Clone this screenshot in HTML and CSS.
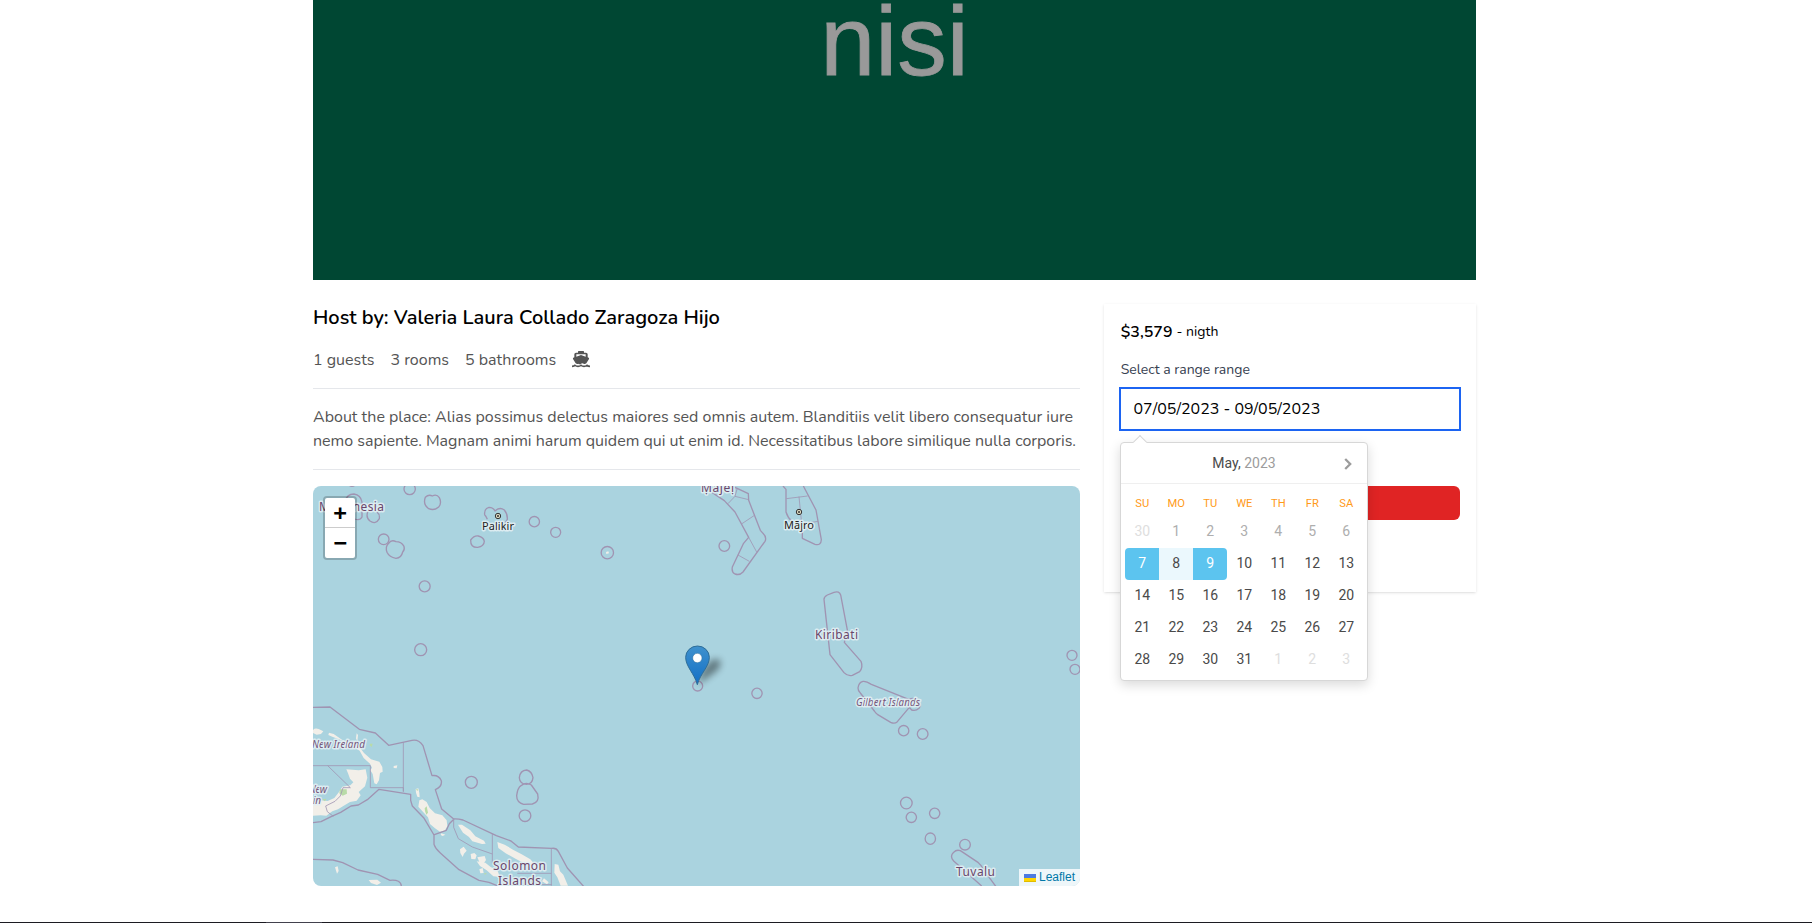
FILE: index.html
```html
<!DOCTYPE html>
<html lang="en">
<head>
<meta charset="utf-8">
<title>Place</title>
<link rel="stylesheet" href="styles.css">
</head>
<body>
<main class="page">
  <div class="hero"><span class="hero-text">nisi</span></div>
  <div class="columns">
    <section class="details">
      <h1 class="host">Host by: Valeria Laura Collado Zaragoza Hijo</h1>
      <div class="facts">
        <span>1 guests</span><span>3 rooms</span><span>5 bathrooms</span>
        <svg class="ship" viewBox="0 0 54 48"><path fill-rule="evenodd" d="M18 2q0-2 2-2h14q2 0 2 2v3h6q5 0 5 5v9l3 1.500q2 1.500 1 3.500L43 37q-4 3-8 1-4-3-8 0t-8 0q-4 2-8-1L3 24q-1-2 1-3.500L7 19v-9q0-5 5-5h6zM13 10v7l14-5 14 5v-7z"/><path d="M0 46q7 0 9-3 4 3 9 3t9-3q4 3 9 3t9-3q3 3 9 3" class="wave"/></svg>
      </div>
      <p class="about">About the place: Alias possimus delectus maiores sed omnis autem. Blanditiis velit libero consequatur iure nemo sapiente. Magnam animi harum quidem qui ut enim id. Necessitatibus labore similique nulla corporis.</p>
      <div class="map">
        <svg class="map-art" viewBox="313 486 767 400">
          <defs>
            <linearGradient id="pin" x2="0" y2="1"><stop stop-color="#3f91cd"/><stop offset="1" stop-color="#126fc6"/></linearGradient>
            <filter id="soft" x="-50%" y="-50%" width="200%" height="200%"><feGaussianBlur stdDeviation="11"/></filter>
          </defs>
          <!-- north-west atolls -->
          <g class="coast" transform="translate(300 480) scale(.33333)">
            <circle cx="156" cy="6" r="13"/><circle cx="329" cy="27" r="17"/>
            <path d="M376 52q10-10 21-4 13-7 21 5 8 16-2 28-13 12-30 5-18-13-10-34z"/>
            <path d="M136 64q4-22 26-22 20 3 24 24v45q-6 12-22 6M204 94q-8 18 6 29 17 12 28-7 2-13-7-20"/>
            <circle cx="251" cy="178" r="16"/>
            <path d="M266 190q8-12 22-5 16 0 24 14 3 11-4 17-4 18-20 19-20-3-27-18-6-17 5-27z"/>
            <circle cx="374" cy="319" r="16.500"/><circle cx="362" cy="509" r="18"/>
            <path d="M562 118q-3-9-8-14-2-18 13-22 14 1 18 11 14-13 28-3 10 12 9 28l-8 14"/>
            <path d="M512 180q10-14 23-12 16 4 18 16-1 16-20 18-22 1-21-22z"/>
            <circle cx="703" cy="125" r="15.500"/><circle cx="767" cy="157" r="15"/>
          </g>
          <!-- Marshall Islands, Kiribati -->
          <g class="coast" transform="translate(600 480) scale(.33333)">
            <circle cx="22" cy="218" r="18.500"/><path class="speck" d="M18 216l7-2 2 6-8 2z"/><circle cx="373" cy="198" r="16"/>
            <path d="M337 38l36 24 32 34 41 76-16 19-33 70q-3 16 8 21 14 5 24-6l66-92q6-12-6-24l-8-9-35-90-1-20-40-19"/>
            <path class="thin" d="M384 71l21-22 41 10M405 49l7-25M426 131l39-26M446 172l24 44M414 225l34 19M559 56l64-8M597 50l8 80M606 132l48-8"/>
            <path d="M549 18l9 10v68q5 17 18 28M610 18l38 72 16 89q-1 19-19 14l-38-18v-24"/>
            <path d="M672 358q0-8 10-13l20-8q16-5 20 8l20 105-9 37 50 57q7 18-4 31l-22 11q-15 3-25-8l-42-54z"/>
            <circle cx="471" cy="640" r="15.500"/><circle cx="293" cy="618" r="15"/>
          </g>
          <!-- Gilbert Islands -->
          <g class="coast" transform="translate(780 580) scale(.33333)">
            <path d="M234 324q2-17 15-20 10-1 25 9l114 46q12-8 25 3 11 11 4 23-10 9-22 5l-7-8-36 43q-8 8-20 2l-40-24q-5-4-9-10l-42-54q-7-6-7-15z"/>
            <circle cx="371" cy="452" r="15.500"/><circle cx="428" cy="462" r="16"/>
            <circle cx="876" cy="226" r="15"/><circle cx="885" cy="268" r="15"/>
          </g>
          <!-- Tuvalu -->
          <g class="coast" transform="translate(840 770) scale(.33333)">
            <circle cx="199" cy="99" r="17.500"/><circle cx="214" cy="142" r="15.500"/><circle cx="284" cy="130" r="15.500"/>
            <ellipse cx="271" cy="206" rx="15.500" ry="17"/><circle cx="375" cy="224" r="16"/>
            <path d="M425 348l-84-75q-13-14 0-26 8-9 20-5l54 36q10 8 15 20l38 52"/>
          </g>
          <!-- Bismarck Archipelago and Solomon Islands -->
          <g transform="translate(300 690) scale(.33333)">
            <g class="land">
              <path d="M39 120q6-7 17-3l14 7-7 8-13 2-11-5zM87 128l14 4 25 17 30 12 24 12 12 16 21 19 25 7 9 16 1 14-8 4-3 22-7 12-7-3-5-28-7-11 5-8-6-12-19-17-12-22-16-10-31-18-35-14-12-5zM139 238l37 3 21-3 5 25-7 26-19 17 6 10-12 16-20 4-20 12-16 10-17 6-18 13-17-1-23 1v-40l20-6 24 2 20-9 14-18 10-16 24-4 9-9-10-11-6-16z"/>
              <path d="M347 297l8-2 3 14 1 13-7-2-4-12zM358 331l9-3 13 8 9 18 16 16 22 6 13 15 2 18-8 13-14 3-15-10-15-13-6-20-14-15-15-17zM474 404l12 0 25 17 15 18 26 13 5 9-11 1-29-8-10-13-18-13zM592 456l22 8 25 15 26 14 26 15 15 17 4 16-16-7-17-12-29-15-31-17-22-16zM480 478l11-8 9 12-8 9-4 10-7-12zM512 492l11-3 7 7-4 12-12-1zM532 502l22-4 4 12-8 12-9 1zM530 514l26 4 16 13 20 10 8 20-20-2-20-18-20-13zM764 522l11 2 5 20 10 10 14 33h-22l-10-25-9-14zM206 570l26-1 11 9-12 7-18-6zM105 532l8-3 3 14-5 8zM170 130l4 5-2 20-4-10zM281 228l11-2-2 9-9-1zM424 430l12 4-8 4-6-3zM538 538l10-4 3 15-10 1zM732 565l14 12-5 6-15-9z"/>
            </g>
            <path class="park" d="M120 298l20 0 1 13-13 6-10-7zM210 161l8 0-3 10-6-5zM67 328l12-2-4 8zM348 297l6 1-2 6zM374 355l6-6 4 19-5 6-4-11zM553 548l8 3-7 3z"/>
            <g class="coast">
              <path d="M39 52l51-1 88 67 48 11 40 37 70-15q20-4 33 16l27 90q20-3 28 15 3 18-18 27l19 58 36 30q12-1 28 3l100 47 44 16 22 18 100 4q14-2 20 9l27 50 62 70M39 398l24-3 32-16 27-12 31-19 22-3 27-16 35-31 95 15v18l5 17 34 35 31 52v28q4 13 19 26l56 50 60 32 30 6 30 12M401 435l38-14 9-20 12-12M39 508l60 2 29 8 46 22 59 13 37 18q33-3 34 17"/>
              <circle cx="514" cy="277" r="18"/><path d="M658 263q2-22 22-23 16 4 19 23-2 20-20 20-20-2-21-20zM663 287q14-12 31-2l19 27q6 25-16 30l-26 1q-21-6-21-26 3-24 13-30z"/><circle cx="675" cy="377" r="17.500"/>
              <path class="thin" d="M39 227h172v66h99v12M310 157v148M83 227l68 66h-22l-8 25-16 16-28 14 5 17 18 14M461 388v24l14 34 42 25 60 21M577 432v88M652 550h102M754 474v113M725 584h30"/>
            </g>
          </g>
          <g class="labels">
            <text x="319" y="511" class="country" textLength="65">Micronesia</text>
            <text x="701" y="491.500" class="country" textLength="33">Ṃajeḷ</text>
            <text x="482" y="530" class="city" textLength="32">Palikir</text>
            <text x="784" y="529" class="city" textLength="30">Mājro</text>
            <text x="815" y="638.500" class="country" textLength="43">Kiribati</text>
            <text x="856" y="706" class="region" textLength="64">Gilbert Islands</text>
            <text x="312" y="748" class="region" textLength="53">New Ireland</text>
            <text x="309" y="792.500" class="region" textLength="18">New</text>
            <text x="313" y="804" class="region" textLength="8">in</text>
            <text x="493" y="870" class="country" textLength="53">Solomon</text>
            <text x="498" y="885" class="country" textLength="43">Islands</text>
            <text x="956" y="876" class="country" textLength="39">Tuvalu</text>
          </g>
          <g class="capital"><circle cx="498" cy="516" r="2.700"/><circle cx="498" cy="516" r=".8"/><circle cx="799" cy="512" r="2.700"/><circle cx="799" cy="512" r=".8"/></g>
          <g transform="translate(600 480) scale(.33333)">
            <path d="M293 614l14-44 24-27q21-12 30 0 5 20-20 37z" fill="#000" opacity=".42" filter="url(#soft)"/>
            <path d="M292 614C283 580 257 560 257 532a35.500 34 0 0 1 71 0c0 28-27 48-36 82z" fill="url(#pin)" stroke="#2e6c97" stroke-width="3"/>
            <circle cx="292" cy="534" r="14" fill="#fff" stroke="#2e6c97" stroke-width="1.500"/>
          </g>
        </svg>
        <div class="zoom"><a class="in">+</a><a class="out">−</a></div>
        <div class="credit"><svg width="12" height="8" viewBox="0 0 12 8"><path fill="#4C7BE1" d="M0 0h12v4H0z"/><path fill="#FFD500" d="M0 4h12v3H0z"/><path fill="#E0BC00" d="M0 7h12v1H0z"/></svg><span>Leaflet</span></div>
      </div>
    </section>
    <aside class="card">
      <div class="price"><b>$3,579</b><span>- nigth</span></div>
      <label class="label">Select a range range</label>
      <div class="input"><span>07/05/2023 - 09/05/2023</span></div>
      <div class="button"></div>
      <div class="picker">
        <i class="pointer"></i>
        <div class="picker-nav"><span>May, <em>2023</em></span><svg class="next" viewBox="0 0 8 12"><path d="M1.200 1l5 5-5 5"/></svg></div>
        <div class="week"><span>SU</span><span>MO</span><span>TU</span><span>WE</span><span>TH</span><span>FR</span><span>SA</span></div>
        <div class="days">
          <span class="other">30</span><span class="off">1</span><span class="off">2</span><span class="off">3</span><span class="off">4</span><span class="off">5</span><span class="off">6</span>
          <span class="sel from">7</span><span class="between">8</span><span class="sel to">9</span><span>10</span><span>11</span><span>12</span><span>13</span>
          <span>14</span><span>15</span><span>16</span><span>17</span><span>18</span><span>19</span><span>20</span>
          <span>21</span><span>22</span><span>23</span><span>24</span><span>25</span><span>26</span><span>27</span>
          <span>28</span><span>29</span><span>30</span><span>31</span><span class="other">1</span><span class="other">2</span><span class="other">3</span>
        </div>
      </div>
    </aside>
  </div>
</main>
<div class="edge"><i></i></div>
</body>
</html>
```
FILE: styles.css
```css
* { box-sizing: border-box; }
body { margin: 0; height: 923px; overflow: hidden; background: #fff; font: 16px/24px Nunito, Lato, sans-serif; color: #000; display: flex; flex-direction: column; }
.page { width: 1163px; margin-left: 313px; flex: 1; }
.hero { height: 280px; background: #004733; text-align: center; overflow: hidden; }
.hero-text { display: block; margin-top: -17px; font: 99px/115px "Liberation Sans", sans-serif; color: #999; -webkit-text-stroke: .8px #999; filter: blur(.6px); }
.columns { display: grid; grid-template-columns: 767px 372px; gap: 24px; margin-top: 24px; align-items: start; }
.host { margin: 0; font-size: 20px; line-height: 28px; font-weight: 600; white-space: nowrap; }
.facts { display: flex; gap: 16px; height: 41px; margin-top: 16px; border-bottom: 1px solid #e5e7eb; color: #545454; }
.ship { width: 18px; height: 16px; margin-top: 3px; fill: #545454; overflow: visible; }
.wave { fill: none; stroke: #545454; stroke-width: 5; }
.about { margin: 0 0 16px; padding: 16px 0; height: 81px; border-bottom: 1px solid #e5e7eb; color: #545454; }
.map { position: relative; height: 400px; border-radius: 8px; overflow: hidden; background: #aad3df; }
.map-art { display: block; width: 767px; height: 400px; }
.coast { fill: none; stroke: #a094b2; stroke-width: 4; stroke-linejoin: round; }
.thin { stroke-width: 2.4; }
.speck { fill: #f2efe9; stroke: none; }
.land { fill: #f2efe9; }
.park { fill: #b9dba8; }
.labels { font-family: "Noto Sans", sans-serif; paint-order: stroke; stroke: #e4f0f4; stroke-opacity: .85; stroke-width: 3px; stroke-linejoin: round; }
.country { font-size: 12px; fill: #6b476b; }
.city { font-size: 11px; fill: #222; }
.region { font-size: 10px; font-style: italic; fill: #75557b; }
.capital { fill: #e8e5ca; stroke: #333; stroke-width: 1; }
.zoom { position: absolute; left: 10px; top: 10px; width: 34px; height: 64px; border: 2px solid rgba(0,0,0,.2); border-radius: 4px; background: #fff; background-clip: padding-box; font: bold 22px/30px "DejaVu Sans Mono", monospace; text-align: center; }
.zoom a { display: block; height: 30px; }
.zoom .in { border-bottom: 1px solid #ccc; }
.credit { position: absolute; right: 0; bottom: 0; width: 61px; height: 17px; padding-left: 5px; display: flex; align-items: center; gap: 3px; background: rgba(255,255,255,.8); font: 12px/17px "Liberation Sans", sans-serif; color: #0078a8; }
.card { position: relative; height: 288px; padding: 16px 16px 0; box-shadow: 0 1px 3px rgba(0,0,0,.1), 0 1px 2px -1px rgba(0,0,0,.1); }
.price { display: flex; gap: 4px; height: 24px; padding-left: .7px; }
.price b { font-weight: 600; }
.price span { font-size: 14px; }
.label { display: block; margin-top: 16px; padding-left: .7px; font-size: 14px; line-height: 20px; color: #374151; }
.input { width: 342px; height: 44px; margin: 7px 0 0 -1px; padding: 8px 12.500px; border: 2px solid #1c64f2; background: #fff; }
.button { margin-top: 55px; height: 34px; border-radius: 6px; background: #e02424; }
.picker { position: absolute; left: 16px; top: 138px; width: 248px; height: 239px; border: 1px solid #d7d7d7; border-radius: 4px; background: #fff; box-shadow: 0 4px 12px rgba(0,0,0,.15); font-family: Roboto, sans-serif; color: #4a4a4a; }
.pointer { position: absolute; left: 14px; top: -6px; width: 10px; height: 10px; background: #fff; border-top: 1px solid #d7d7d7; border-right: 1px solid #d7d7d7; transform: rotate(-45deg); }
.picker-nav { position: relative; height: 41px; border-bottom: 1px solid #efefef; font-size: 14px; line-height: 40px; text-align: center; }
.picker-nav em { font-style: normal; color: #9c9c9c; }
.next { position: absolute; right: 15px; top: 15px; width: 8px; height: 12px; fill: none; stroke: #9c9c9c; stroke-width: 2.3; }
.week, .days { display: grid; grid-template-columns: repeat(7, 34px); padding: 0 4px; text-align: center; }
.week { height: 32px; padding-top: 11px; font-size: 11.2px; line-height: 18px; color: #ff9a19; }
.week span, .days span { padding-left: .6px; }
.days { grid-auto-rows: 32px; font-size: 14px; line-height: 30px; }
.off { color: #aeaeae; }
.other { color: #dedede; }
.sel { background: #5cc4ef; color: #fff; }
.from { border-radius: 4px 0 0 4px; }
.to { border-radius: 0 4px 4px 0; }
.between { background: #ebf8fd; }
.edge { height: 1px; background: #1c1b22; }
.edge i { display: block; width: 56px; height: 1px; margin-left: 266px; background: #42414d; }
```
